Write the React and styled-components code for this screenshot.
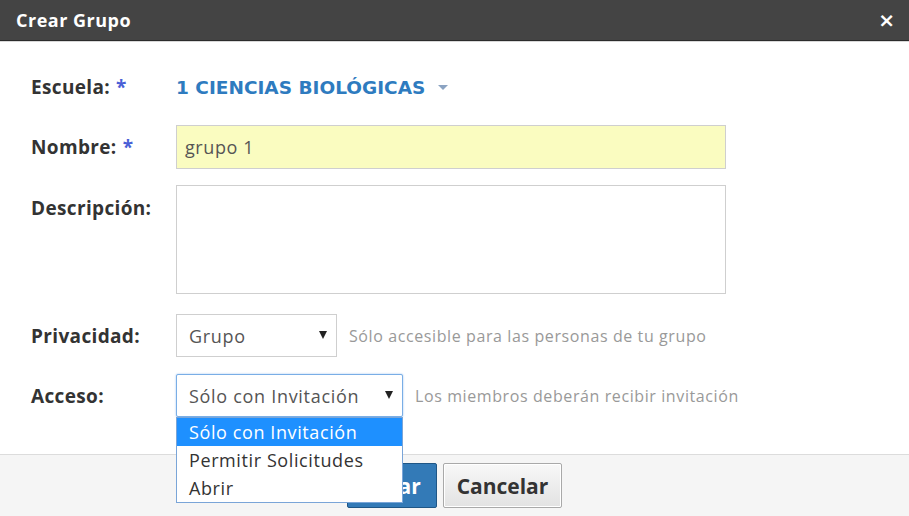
import React from "react";
import styled, { createGlobalStyle } from "styled-components";

const GlobalStyle = createGlobalStyle`
  html, body {
    margin: 0;
    padding: 0;
    background: #fff;
    font-family: "Open Sans", "DejaVu Sans", sans-serif;
  }
  * { box-sizing: border-box; }
`;

const Dialog = styled.div`
  width: 909px;
  height: 516px;
  display: flex;
  flex-direction: column;
  overflow: hidden;
  background: #fff;
`;

const Header = styled.div`
  height: 41px;
  flex: none;
  background: #444;
  border-bottom: 1px solid #2b2b2b;
  box-shadow: 0 1px 0 #d8d8d8;
  display: flex;
  align-items: center;
  justify-content: space-between;
  padding: 0 14px 0 16px;
  color: #fff;
`;

const Title = styled.div`
  font-size: 18px;
  font-weight: 700;
  letter-spacing: 0.5px;
`;

const Close = styled.div`
  font-family: "DejaVu Sans", sans-serif;
  font-size: 20px;
  font-weight: 700;
  line-height: 1;
`;

const Body = styled.div`
  flex: 1;
  padding: 32px 0 0 31px;
  display: flex;
  flex-direction: column;
`;

const Row = styled.div`
  display: flex;
  align-items: ${(p) => (p.$top ? "flex-start" : "center")};
  margin-bottom: ${(p) => p.$gap || 0}px;
  min-height: ${(p) => p.$h || 0}px;
`;

const Label = styled.div`
  width: 145px;
  flex: none;
  font-size: 19px;
  font-weight: 700;
  letter-spacing: 0.35px;
  color: #333;
  padding-top: ${(p) => p.$pt || 0}px;
`;

const Star = styled.span`
  color: #4a5fd6;
  margin-left: 6px;
`;

const SchoolPick = styled.div`
  display: flex;
  align-items: center;
  font-family: "DejaVu Sans", sans-serif;
  font-size: 18.5px;
  font-weight: 700;
  color: #2e7bbf;
`;

const Caret = styled.span`
  display: inline-block;
  margin-left: 13px;
  width: 0;
  height: 0;
  border-left: 5px solid transparent;
  border-right: 5px solid transparent;
  border-top: 5px solid #8ba3c2;
`;

const TextInput = styled.div`
  width: 550px;
  height: 44px;
  border: 1px solid #cfcfcf;
  background: ${(p) => p.$bg || "#fff"};
  font-size: 18px;
  letter-spacing: 0.6px;
  color: #555;
  padding: 0 8px;
  display: flex;
  align-items: center;
`;

const TextArea = styled.div`
  width: 550px;
  height: 109px;
  border: 1px solid #cfcfcf;
  background: #fff;
`;

const SelectWrap = styled.div`
  position: relative;
`;

const Select = styled.div`
  width: ${(p) => p.$w}px;
  height: ${(p) => p.$h || 43}px;
  border: 1px solid ${(p) => (p.$focus ? "#7aaee6" : "#cfcfcf")};
  box-shadow: ${(p) => (p.$focus ? "0 0 2px rgba(80,150,230,0.6)" : "none")};
  border-radius: ${(p) => (p.$focus ? "2px" : "0")};
  background: #fff;
  display: flex;
  align-items: center;
  justify-content: space-between;
  padding: 0 9px 0 12px;
  font-size: 18px;
  letter-spacing: 0.7px;
  color: #555;
`;

const Arrow = styled.span`
  width: 0;
  height: 0;
  border-left: 4px solid transparent;
  border-right: 4px solid transparent;
  border-top: 8px solid #222;
  margin-top: -2px;
`;

const Hint = styled.div`
  margin-left: 12px;
  font-size: 16px;
  letter-spacing: 0.6px;
  color: #999;
`;

const Menu = styled.div`
  position: absolute;
  top: 100%;
  left: 0;
  width: 227px;
  background: #fff;
  border: 1px solid #7aa5d8;
  z-index: 10;
`;

const Option = styled.div`
  height: 28px;
  line-height: 28px;
  padding: 0 12px;
  font-size: 18px;
  letter-spacing: 0.6px;
  color: ${(p) => (p.$active ? "#fff" : "#333")};
  background: ${(p) => (p.$active ? "#1e90ff" : "#fff")};
`;

const Footer = styled.div`
  height: 62px;
  flex: none;
  background: #f5f5f5;
  border-top: 1px solid #dcdcdc;
  display: flex;
  align-items: flex-start;
  padding: 8px 0 0 347px;
  gap: 6px;
`;

const Button = styled.div`
  height: 45px;
  display: flex;
  align-items: center;
  justify-content: center;
  font-size: 21px;
  font-weight: 700;
  color: ${(p) => (p.$primary ? "#fff" : "#333")};
  background: ${(p) =>
    p.$primary ? "#337ab7" : "linear-gradient(#f8f8f8, #e2e2e2)"};
  border: 1px solid ${(p) => (p.$primary ? "#1f5686" : "#a9a9a9")};
  box-shadow: ${(p) => (p.$primary ? "none" : "inset 0 0 0 1px #fff")};
  border-radius: 2px;
  width: ${(p) => p.$w}px;
`;

export default function App() {
  return (
    <>
      <GlobalStyle />
      <Dialog>
        <Header>
          <Title>Crear Grupo</Title>
          <Close>×</Close>
        </Header>
        <Body>
          <Row $h={28} $gap={24}>
            <Label>
              Escuela:<Star>*</Star>
            </Label>
            <SchoolPick>
              1 CIENCIAS BIOLÓGICAS
              <Caret />
            </SchoolPick>
          </Row>
          <Row $gap={16}>
            <Label>
              Nombre:<Star>*</Star>
            </Label>
            <TextInput $bg="#fafcc0">grupo 1</TextInput>
          </Row>
          <Row $top $gap={20}>
            <Label $pt={10}>Descripción:</Label>
            <TextArea />
          </Row>
          <Row $gap={17}>
            <Label>Privacidad:</Label>
            <Select $w={161}>
              Grupo
              <Arrow />
            </Select>
            <Hint>Sólo accesible para las personas de tu grupo</Hint>
          </Row>
          <Row>
            <Label>Acceso:</Label>
            <SelectWrap>
              <Select $w={227} $focus>
                Sólo con Invitación
                <Arrow />
              </Select>
              <Menu>
                <Option $active>Sólo con Invitación</Option>
                <Option>Permitir Solicitudes</Option>
                <Option>Abrir</Option>
              </Menu>
            </SelectWrap>
            <Hint>Los miembros deberán recibir invitación</Hint>
          </Row>
        </Body>
        <Footer>
          <Button $primary $w={90}>Crear</Button>
          <Button $w={119}>Cancelar</Button>
        </Footer>
      </Dialog>
    </>
  );
}
